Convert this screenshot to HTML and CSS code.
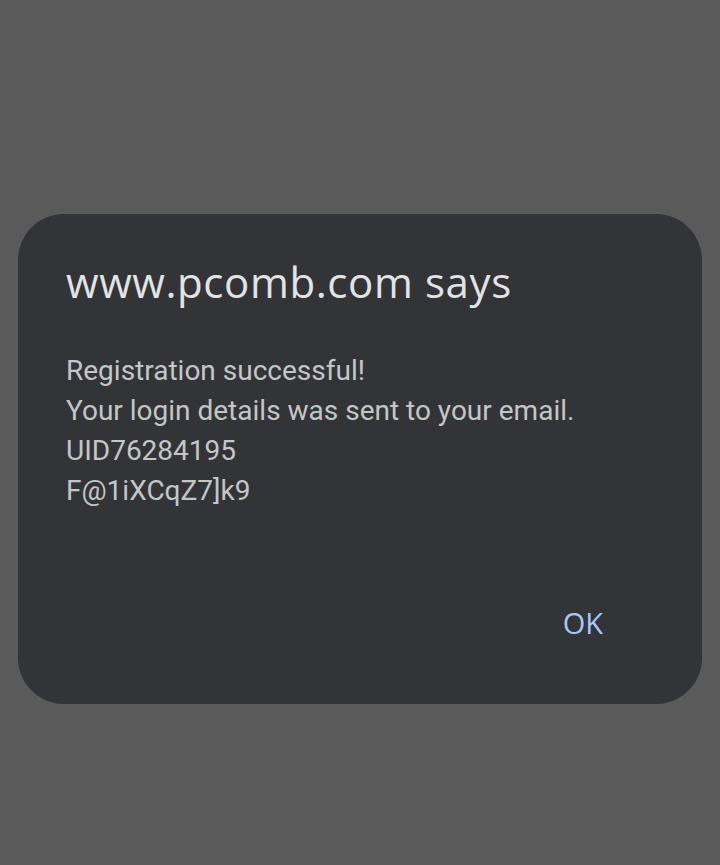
FILE: index.html
```html
<!DOCTYPE html>
<html lang="en">
<head>
    <meta charset="UTF-8">
    <meta name="viewport" content="width=device-width, initial-scale=1.0">
    <title>Alert</title>
    <link rel="stylesheet" href="styles.css">
</head>
<body>
<div class="overlay">
    <div class="dialog">
        <h1 class="dialog-title">www.pcomb.com says</h1>
        <div class="dialog-message">
            <p>Registration successful!</p>
            <p>Your login details was sent to your email.</p>
            <p>UID76284195</p>
            <p>F@1iXCqZ7]k9</p>
        </div>
        <div class="dialog-actions">
            <button type="button" class="ok-button">OK</button>
        </div>
    </div>
</div>
</body>
</html>
```

FILE: styles.css
```css
html, body {
    margin: 0;
    height: 100%;
}
body {
    background-color: #5a5a5a;
    font-family: Roboto, "Noto Sans", sans-serif;
}
.overlay {
    padding: 214px 18px 0 18px;
}
.dialog {
    background-color: #323438;
    border-radius: 46px;
    height: 490px;
    box-sizing: border-box;
    padding: 44px 48px 0 48px;
    display: flex;
    flex-direction: column;
}
.dialog-title {
    margin: 0;
    font-family: "Open Sans", sans-serif;
    font-weight: 400;
    font-size: 42px;
    line-height: 48px;
    color: #e3e3e3;
    letter-spacing: 0.6px;
}
.dialog-message {
    margin-top: 45px;
    color: #c4c7c5;
    font-size: 28px;
    line-height: 40px;
}
.dialog-message p {
    margin: 0;
}
.dialog-actions {
    margin-top: auto;
    display: flex;
    justify-content: flex-end;
    padding-bottom: 63px;
    padding-right: 51px;
}
.ok-button {
    background: none;
    border: none;
    color: #a8c7fa;
    font-family: "Open Sans", sans-serif;
    font-size: 29px;
    padding: 0;
    line-height: 36px;
    cursor: pointer;
}
```
